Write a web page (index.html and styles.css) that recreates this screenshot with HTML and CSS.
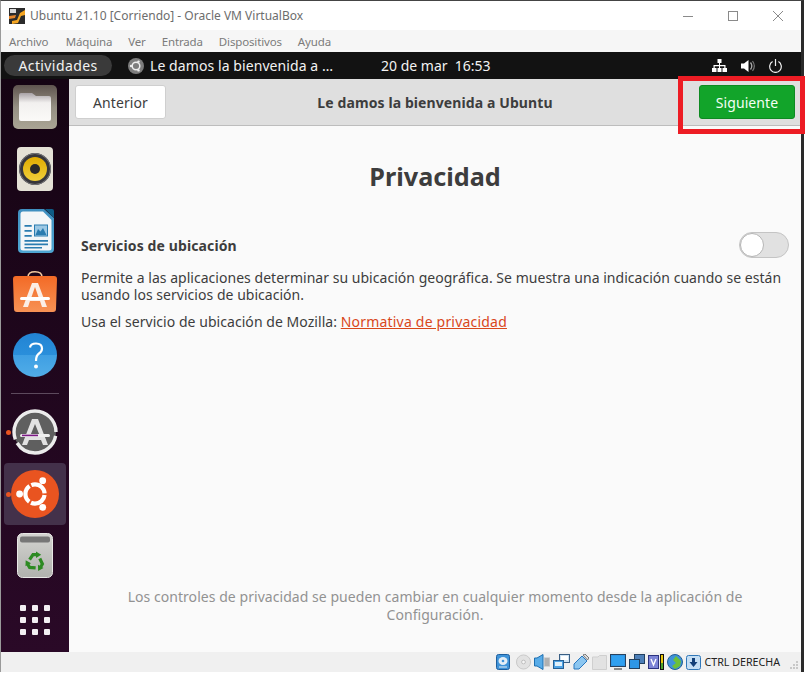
FILE: index.html
```html
<!DOCTYPE html>
<html lang="es">
<head>
    <meta charset="UTF-8">
    <title>Ubuntu 21.10 [Corriendo] - Oracle VM VirtualBox</title>
    <link rel="stylesheet" href="styles.css">
</head>
<body>
    <div class="window">
        <!-- VirtualBox title bar -->
        <div class="titlebar">
            <svg class="vbox-logo" width="16" height="16" viewBox="0 0 16 16">
                <rect width="16" height="16" fill="#2b2b2b"/>
                <path d="M3 13 L8 12 L11 5 L16 2 L16 7 L12 8 L9 15 L3 16 Z" fill="#f5a623"/>
                <rect x="1" y="1" width="6" height="4" fill="#d8d8d8"/>
                <path d="M0 8 L7 7 L6 10 L0 11 Z" fill="#e8862a"/>
            </svg>
            <span class="titlebar-text">Ubuntu 21.10 [Corriendo] - Oracle VM VirtualBox</span>
            <div class="win-controls">
                <svg width="10" height="10" viewBox="0 0 10 10"><path d="M0 5.5 H10" stroke="#8a8a8a" fill="none"/></svg>
                <svg width="10" height="10" viewBox="0 0 10 10"><rect x="0.5" y="0.5" width="9" height="9" stroke="#8a8a8a" fill="none"/></svg>
                <svg width="10" height="10" viewBox="0 0 10 10"><path d="M0 0 L10 10 M10 0 L0 10" stroke="#8a8a8a" fill="none"/></svg>
            </div>
        </div>
        <ul class="menubar">
            <li>Archivo</li>
            <li>Máquina</li>
            <li>Ver</li>
            <li>Entrada</li>
            <li>Dispositivos</li>
            <li>Ayuda</li>
        </ul>

        <!-- Guest screen -->
        <div class="topbar">
            <span class="activities">Actividades</span>
            <svg class="app-icon" width="16" height="16" viewBox="0 0 16 16">
                <circle cx="8" cy="8" r="8" fill="#7d7d7d"/>
                <circle cx="8" cy="8" r="3.8" fill="none" stroke="#eee" stroke-width="1.5"/>
                <circle cx="3" cy="8" r="1.2" fill="#eee"/>
                <circle cx="10.5" cy="3.6" r="1.2" fill="#eee"/>
                <circle cx="10.5" cy="12.4" r="1.2" fill="#eee"/>
            </svg>
            <span class="app-name">Le damos la bienvenida a …</span>
            <span class="clock">20 de mar&nbsp;&nbsp;16:53</span>
            <div class="tray">
                <svg width="15" height="14" viewBox="0 0 15 14"><path d="M5.5 0 H9.5 V4 H8 V6 H13.5 V9 H15 V13 H10.5 V9 H12.3 V7.2 H8 V9 H9.5 V13 H5.5 V9 H7 V7.2 H2.7 V9 H4.5 V13 H0 V9 H1.5 V6 H7 V4 H5.5 Z" fill="#fff"/></svg>
                <svg width="14" height="14" viewBox="0 0 14 14"><path d="M0 4.5 H3 L7.5 1 V13 L3 9.5 H0 Z" fill="#fff"/><path d="M9.5 3.5 C11 5.5 11 8.5 9.5 10.5" fill="none" stroke="#aaa" stroke-width="1.3"/><path d="M11.5 2 C13.7 5 13.7 9 11.5 12" fill="none" stroke="#777" stroke-width="1.2"/></svg>
                <svg width="13" height="14" viewBox="0 0 13 14"><path d="M3.6 2.6 A5.8 5.8 0 1 0 9.4 2.6" fill="none" stroke="#eee" stroke-width="1.2"/><path d="M6.5 0 V7" stroke="#eee" stroke-width="1.2"/></svg>
            </div>
        </div>

        <div class="desktop">
            <div class="dock">
                <svg class="dock-icon" width="44" height="44" viewBox="0 0 44 44">
                    <defs>
                        <linearGradient id="fileTop" x1="0" y1="0" x2="0" y2="1"><stop offset="0" stop-color="#5f554f"/><stop offset="0.5" stop-color="#958f83"/><stop offset="1" stop-color="#aaa595"/></linearGradient>
                        <linearGradient id="fileDoc" x1="0" y1="0" x2="0" y2="1"><stop offset="0" stop-color="#a8a2a6"/><stop offset="0.35" stop-color="#f2f0ef"/><stop offset="1" stop-color="#fbfaf8"/></linearGradient>
                    </defs>
                    <rect width="44" height="44" rx="5" fill="url(#fileTop)"/>
                    <path d="M6 10 Q6 8 8 8 H19 L23 11 H36 Q38 11 38 13 V34 Q38 36 36 36 H8 Q6 36 6 34 Z" fill="url(#fileDoc)"/>
                </svg>
                <svg class="dock-icon" width="44" height="44" viewBox="0 0 44 44">
                    <defs>
                        <linearGradient id="rhythmCone" x1="0" y1="0" x2="0" y2="1"><stop offset="0" stop-color="#e0ab00"/><stop offset="1" stop-color="#f0cf3a"/></linearGradient>
                    </defs>
                    <rect x="4" width="36" height="44" rx="4" fill="#e4e1d6"/>
                    <circle cx="22" cy="22" r="16" fill="#37373c"/>
                    <circle cx="22" cy="22" r="15.5" fill="none" stroke="#77777a" stroke-width="1"/>
                    <circle cx="22" cy="22" r="12" fill="url(#rhythmCone)"/>
                    <circle cx="22" cy="22" r="5" fill="#2a2a2a"/>
                </svg>
                <svg class="dock-icon shifted" width="36" height="44" viewBox="0 0 36 44">
                    <defs>
                        <linearGradient id="writerRim" x1="0" y1="0" x2="0" y2="1"><stop offset="0" stop-color="#3f8fc0"/><stop offset="1" stop-color="#4ea6d2"/></linearGradient>
                    </defs>
                    <path d="M4 0 H26 L36 9 V40 Q36 44 32 44 H4 Q0 44 0 40 V4 Q0 0 4 0 Z" fill="url(#writerRim)"/>
                    <path d="M5 2.5 H25 L33.5 11 V39 Q33.5 41.5 31 41.5 H5 Q2.5 41.5 2.5 39 V5 Q2.5 2.5 5 2.5 Z" fill="#f3f6f8"/>
                    <path d="M27 0 H34 Q36 0 36 2 V9 Z" fill="#0f5c86"/>
                    <path d="M6.5 16 H13.7 V17.7 H6.5 Z M6.5 21 H13.7 V22.7 H6.5 Z M6.5 26 H13.7 V27.7 H6.5 Z M6.5 31 H30 V32.7 H6.5 Z M6.5 34.5 H30 V36.2 H6.5 Z M6.5 38 H24 V39.5 H6.5 Z" fill="#2a7cb0"/>
                    <rect x="16.5" y="16" width="13" height="11" fill="#9cc8e4" stroke="#2a7cb0"/>
                    <path d="M17.5 26 L20 20 L22.5 22.5 L25 19 L28.5 26 Z" fill="#2a7cb0"/>
                </svg>
                <svg class="dock-icon" width="44" height="44" viewBox="0 1 44 44">
                    <defs>
                        <linearGradient id="storeBag" x1="0" y1="0" x2="0" y2="1"><stop offset="0" stop-color="#f36a26"/><stop offset="1" stop-color="#f79255"/></linearGradient>
                    </defs>
                    <path d="M15 7 Q15 1.8 22 1.8 Q29 1.8 29 7" fill="none" stroke="#f2c9a0" stroke-width="1.6"/>
                    <path d="M3 6 H41 Q44 6 44 9 L43 39 Q43 42 40 42 H4 Q1 42 1 39 L0 9 Q0 6 3 6 Z" fill="url(#storeBag)"/>
                    <path d="M19 13 H25 L34 37 H29 L27 31 H17 L15 37 H10 Z M18.5 27 H25.5 L22 17 Z" fill="#fbeee6"/>
                    <rect x="7" y="27" width="30" height="3" rx="1.5" fill="#fff"/>
                </svg>
                <svg class="dock-icon" width="44" height="44" viewBox="0 0 44 44">
                    <defs>
                        <linearGradient id="helpBg" x1="0" y1="0" x2="0" y2="1"><stop offset="0" stop-color="#2283d3"/><stop offset="0.5" stop-color="#2a8fdb"/><stop offset="0.5" stop-color="#3f9fe3"/><stop offset="1" stop-color="#51ade8"/></linearGradient>
                    </defs>
                    <circle cx="22" cy="22" r="22" fill="url(#helpBg)"/>
                    <path d="M17 14.5 Q17.5 10.5 23 10.5 Q29 10.5 29 15.5 Q29 18.5 26 20.5 Q23 22.5 23 28" fill="none" stroke="#fff" stroke-width="2.2"/>
                    <circle cx="23" cy="33.5" r="2" fill="#fff"/>
                </svg>
                <div class="dock-sep"></div>
                <div class="dock-app first-running">
                    <span class="run-dot"></span>
                    <svg width="46" height="46" viewBox="0 0 46 46">
                        <circle cx="23" cy="23" r="21" fill="#5f5f5f"/>
                        <circle cx="23" cy="23" r="21" fill="none" stroke="#ececec" stroke-width="3.4" stroke-dasharray="50 4 78 4" stroke-dashoffset="-4"/>
                        <path d="M20 10 H26 L36 36 H31 L29 31 H17 L15 36 H10 Z M18.5 26 H27.5 L23 15 Z" fill="#e2e2e2"/>
                        <rect x="8" y="25" width="30" height="3" rx="1.5" fill="#eee"/>
                        <rect x="10" y="25.6" width="16" height="1.6" fill="#7d1a86"/>
                    </svg>
                </div>
                <div class="dock-app active">
                    <span class="run-dot"></span>
                    <svg width="48" height="48" viewBox="0 0 48 48">
                        <circle cx="24" cy="24" r="24" fill="#e95420"/>
                        <circle cx="24" cy="24" r="9.6" fill="none" stroke="#fff" stroke-width="4.2" stroke-dasharray="18.1 2" stroke-dashoffset="-1"/>
                        <circle cx="8.6" cy="24" r="3.4" fill="#fff"/>
                        <circle cx="31.7" cy="10.7" r="3.4" fill="#fff"/>
                        <circle cx="31.7" cy="37.3" r="3.4" fill="#fff"/>
                    </svg>
                </div>
                <svg class="dock-icon trash" width="36" height="45" viewBox="0 0 36 45">
                    <defs>
                        <linearGradient id="trashBg" x1="0" y1="0" x2="0" y2="1"><stop offset="0" stop-color="#d4d4d1"/><stop offset="1" stop-color="#b0b1ad"/></linearGradient>
                        <g id="recycleArrow">
                            <path d="M12.6 26.6 L16 21.6 H19.5" fill="none" stroke="#2d8a22" stroke-width="3.2"/>
                            <path d="M19 18.6 L24.2 21.8 L19 25 Z" fill="#2d8a22"/>
                        </g>
                    </defs>
                    <rect x="0.5" y="0.5" width="35" height="44" rx="5" fill="url(#trashBg)" stroke="#e8e8e6"/>
                    <rect x="3" y="3.5" width="30" height="6" rx="2" fill="#777"/>
                    <use href="#recycleArrow"/>
                    <use href="#recycleArrow" transform="rotate(120 18 29)"/>
                    <use href="#recycleArrow" transform="rotate(240 18 29)"/>
                </svg>
                <div class="app-grid">
                    <i></i><i></i><i></i>
                    <i></i><i></i><i></i>
                    <i></i><i></i><i></i>
                </div>
            </div>

            <div class="wizard">
                <div class="wizard-header">
                    <button class="btn">Anterior</button>
                    <div class="wizard-title">Le damos la bienvenida a Ubuntu</div>
                    <button class="btn btn-next">Siguiente</button>
                </div>
                <div class="wizard-body">
                    <h1>Privacidad</h1>
                    <div class="setting-row">
                        <h2>Servicios de ubicación</h2>
                        <span class="toggle"><span class="knob"></span></span>
                    </div>
                    <p class="desc">Permite a las aplicaciones determinar su ubicación geográfica. Se muestra una indicación cuando se están usando los servicios de ubicación.</p>
                    <p class="mozilla">Usa el servicio de ubicación de Mozilla: <a href="#">Normativa de privacidad</a></p>
                    <p class="footnote">Los controles de privacidad se pueden cambiar en cualquier momento desde la aplicación de Configuración.</p>
                </div>
            </div>
        </div>

        <!-- VirtualBox status bar -->
        <div class="statusbar">
            <svg width="14" height="16" viewBox="0 0 14 16"><rect x="0.5" y="0.5" width="13" height="15" rx="2" fill="#3f93d8" stroke="#1d5f9e"/><ellipse cx="7" cy="7" rx="4.5" ry="4" fill="#e4eef6"/><circle cx="7" cy="7" r="1.3" fill="#3f93d8"/><path d="M3 13 H11" stroke="#e4eef6"/></svg>
            <svg class="cd-icon" width="15" height="16" viewBox="0 0 16 16"><circle cx="8" cy="8" r="7.5" fill="#e2e2e2" stroke="#c6c6c6"/><circle cx="8" cy="8" r="2" fill="#f6f6f6" stroke="#bbb"/></svg>
            <svg width="16" height="16" viewBox="0 0 16 16"><path d="M0.5 4 H3 L9 0.5 V15.5 L3 12 H0.5 Z" fill="#58ace8" stroke="#1d6fb0"/><rect x="10" y="3" width="6" height="10" fill="#d6d6d6"/><path d="M10.5 5 H15.5 M10.5 7 H15.5 M10.5 9 H15.5 M10.5 11 H15.5" stroke="#8c8c8c"/></svg>
            <svg width="17" height="16" viewBox="0 0 17 16"><rect x="6.5" y="0.5" width="10" height="8" fill="#cfe3f3" stroke="#3a5f84"/><rect x="8" y="2" width="7" height="4" fill="#fff"/><rect x="0.5" y="6.5" width="10" height="8" fill="#4ea3e4" stroke="#245f95"/><rect x="2" y="8" width="7" height="4" fill="#dff0fb"/></svg>
            <svg width="16" height="16" viewBox="0 0 16 16"><path d="M1 15 L1 10 L9 2 L14 7 L6 15 Z" fill="#8cc6f0" stroke="#2a78bf"/><path d="M10 1 L12 0 L16 4 L14.5 6 Z" fill="#dcdcdc" stroke="#777"/></svg>
            <svg width="15" height="15" viewBox="0 0 15 15"><path d="M0.5 2 H6 L7.5 0.5 H14.5 V14.5 H0.5 Z" fill="#e2e2e2" stroke="#cfcfcf"/></svg>
            <svg width="16" height="16" viewBox="0 0 16 16"><rect x="0.5" y="0.5" width="15" height="12" fill="#2d96e6" stroke="#27415e"/><rect x="2" y="2" width="12" height="9" fill="#30a0f0"/><path d="M4 15 H12" stroke="#888" stroke-width="2"/></svg>
            <svg width="16" height="16" viewBox="0 0 16 16"><rect x="5.5" y="0.5" width="10" height="9" fill="#4d7fb8" stroke="#22405f"/><rect x="0.5" y="5.5" width="10" height="9" fill="#2d96e6" stroke="#22405f"/></svg>
            <svg width="16" height="16" viewBox="0 0 16 16"><rect x="0.5" y="1.5" width="10" height="13" fill="#7c84d6" stroke="#2c3380"/><path d="M3 5 L5.5 11 L8 5" fill="none" stroke="#fff" stroke-width="1.4"/><rect x="12.5" y="0.5" width="3" height="15" fill="#eac80c" stroke="#111"/><rect x="13" y="9" width="2" height="6" fill="#4da32a"/></svg>
            <svg width="16" height="16" viewBox="0 0 16 16"><circle cx="8" cy="8" r="7.5" fill="#3e93d8" stroke="#235f96"/><path d="M9 2 L14 7 L13 12 L8 15 L5 12 L9 9 L6 6 Z" fill="#6cc03a"/></svg>
            <svg width="15" height="15" viewBox="0 0 15 15"><rect x="0.5" y="0.5" width="14" height="14" rx="2" fill="#c4def4" stroke="#2f77b8"/><path d="M6 3 H9 V7 H11.5 L7.5 12 L3.5 7 H6 Z" fill="#123f78"/></svg>
            <span class="host-key">CTRL DERECHA</span>
            <svg class="grip" width="8" height="8" viewBox="0 0 8 8"><path d="M6 0 H8 V2 H6 Z M3 3 H5 V5 H3 Z M6 3 H8 V5 H6 Z M0 6 H2 V8 H0 Z M3 6 H5 V8 H3 Z M6 6 H8 V8 H6 Z" fill="#c8c8c8"/></svg>
        </div>
    </div>

    <!-- red highlight drawn over the screenshot -->
    <div class="highlight"></div>
</body>
</html>
```

FILE: styles.css
```css
body {
    margin: 0;
    background: #fff;
    font-family: 'Noto Sans', sans-serif;
    position: relative;
    height: 678px;
    overflow: hidden;
}

.window {
    width: 800px;
    height: 671px;
    border-top: 1px solid #444;
    border-right: 3px solid #2a2a2a;
    border-left: 1px solid #9a9a9a;
    display: flex;
    flex-direction: column;
}

/* VirtualBox chrome */
.titlebar {
    height: 29px;
    display: flex;
    align-items: center;
    padding-left: 8px;
    background: #fff;
    flex-shrink: 0;
}

.titlebar-text {
    margin-left: 5px;
    font-size: 12px;
    color: #6d6d6d;
}

.win-controls {
    margin-left: auto;
    display: flex;
    gap: 35px;
    padding-right: 18px;
}

.menubar {
    list-style: none;
    margin: 0;
    padding: 0 0 0 8px;
    height: 22px;
    display: flex;
    gap: 16px;
    align-items: center;
    background: #f6f6f6;
    font-size: 11.5px;
    letter-spacing: -0.15px;
    color: #7b7b7b;
    flex-shrink: 0;
}

.menubar li:first-child {
    margin-right: 1.5px;
}

/* GNOME top bar */
.topbar {
    height: 27px;
    background: #121212;
    color: #f2f2f2;
    display: flex;
    align-items: center;
    font-size: 14px;
    flex-shrink: 0;
}

.activities {
    margin-left: 3px;
    width: 108px;
    height: 21px;
    line-height: 21px;
    text-align: center;
    border-radius: 11px;
    background: #3a3a3a;
    letter-spacing: 0.4px;
}

.app-icon {
    margin-left: 16px;
}

.app-name {
    margin-left: 6px;
    width: 190px;
    white-space: nowrap;
    letter-spacing: 0.08px;
}

.clock {
    margin-left: 41px;
    white-space: nowrap;
}

.tray {
    margin-left: auto;
    display: flex;
    gap: 14px;
    padding-right: 19px;
}

/* Dock */
.desktop {
    flex: 1;
    display: flex;
    min-height: 0;
}

.dock {
    width: 68px;
    flex-shrink: 0;
    padding-top: 6px;
    background: linear-gradient(#150413, #2a0927);
    display: flex;
    flex-direction: column;
    align-items: center;
    box-sizing: border-box;
}

.dock-icon {
    display: block;
    margin-bottom: 18px;
}

.dock-icon.shifted {
    margin-left: 2px;
}

.dock-sep {
    width: 48px;
    height: 1px;
    background: #5d4a5d;
    margin: -2px 0 15px;
}

.dock-app {
    position: relative;
    width: 62px;
    display: flex;
    justify-content: center;
}

.first-running {
    margin-bottom: 8px;
}

.dock-app.active {
    height: 62px;
    align-items: center;
    border-radius: 4px;
    background: #43314a;
    margin-bottom: 8px;
}

.run-dot {
    position: absolute;
    left: 2px;
    top: 50%;
    width: 5px;
    height: 5px;
    margin-top: -2px;
    border-radius: 50%;
    background: #e95420;
}

.trash {
    margin-bottom: 27px;
}

.app-grid {
    display: grid;
    grid-template-columns: repeat(3, 6px);
    gap: 6px;
}

.app-grid i {
    height: 6px;
    border-radius: 1px;
    background: #f2eef2;
}

/* Installer page */
.wizard {
    flex: 1;
    display: flex;
    flex-direction: column;
    min-width: 0;
    color: #3d3d3d;
}

.wizard-header {
    height: 47px;
    padding: 0 6px;
    box-sizing: border-box;
    background: #dfdfdf;
    border-bottom: 1px solid #bdbdbd;
    display: flex;
    align-items: center;
}

.wizard-title {
    flex: 1;
    padding-left: 5px;
    text-align: center;
    font-size: 14px;
    letter-spacing: 0.1px;
    font-weight: bold;
}

.btn {
    width: 91px;
    height: 34px;
    padding: 0;
    font: inherit;
    font-size: 14px;
    letter-spacing: 0.1px;
    color: #3d3d3d;
    background: #fff;
    border: 1px solid #cfcfcf;
    border-radius: 3px;
}

.btn-next {
    width: 96px;
    color: #f4fff4;
    background: #12a42a;
    border-color: #0e8a22;
}

.wizard-body {
    flex: 1;
    display: flex;
    flex-direction: column;
    padding: 0 12px;
    background: #fafafa;
    font-size: 14px;
}

.wizard-body h1 {
    margin: 32px 0 0;
    height: 37px;
    line-height: 37px;
    text-align: center;
    font-size: 25.2px;
}

.setting-row {
    margin-top: 37px;
    height: 26px;
    display: flex;
    align-items: center;
    justify-content: space-between;
}

.setting-row h2 {
    margin: 0;
    font-size: 14px;
    letter-spacing: 0.12px;
}

.toggle {
    display: block;
    width: 50px;
    height: 26px;
    box-sizing: border-box;
    border: 1px solid #c4c4c4;
    border-radius: 13px;
    background: #e1e1e1;
}

.knob {
    display: block;
    width: 24px;
    height: 24px;
    box-sizing: border-box;
    border: 1px solid #b5b5b5;
    border-radius: 50%;
    background: #fff;
}

.desc {
    margin: 12px 0 0;
    line-height: 16.5px;
    letter-spacing: 0.03px;
}

.mozilla {
    margin: 10px 0 0;
    line-height: 18px;
    letter-spacing: 0.05px;
}

.mozilla a {
    color: #d9471a;
    letter-spacing: 0.2px;
}

.footnote {
    margin: auto 0 28px;
    padding: 0 40px;
    line-height: 18px;
    text-align: center;
    letter-spacing: 0.05px;
    color: #929292;
}

/* status bar */
.statusbar {
    height: 20px;
    flex-shrink: 0;
    background: #f0f0f0;
    display: flex;
    align-items: center;
    justify-content: flex-end;
    gap: 3px;
}

.cd-icon {
    margin-left: 3px;
}

.host-key {
    font-size: 10.7px;
    color: #222;
    white-space: nowrap;
}

.grip {
    margin: 6px 3px 0 7px;
}

.highlight {
    position: absolute;
    left: 678px;
    top: 76px;
    width: 127px;
    height: 58px;
    box-sizing: border-box;
    border: 5px solid #ed1c24;
}
```
